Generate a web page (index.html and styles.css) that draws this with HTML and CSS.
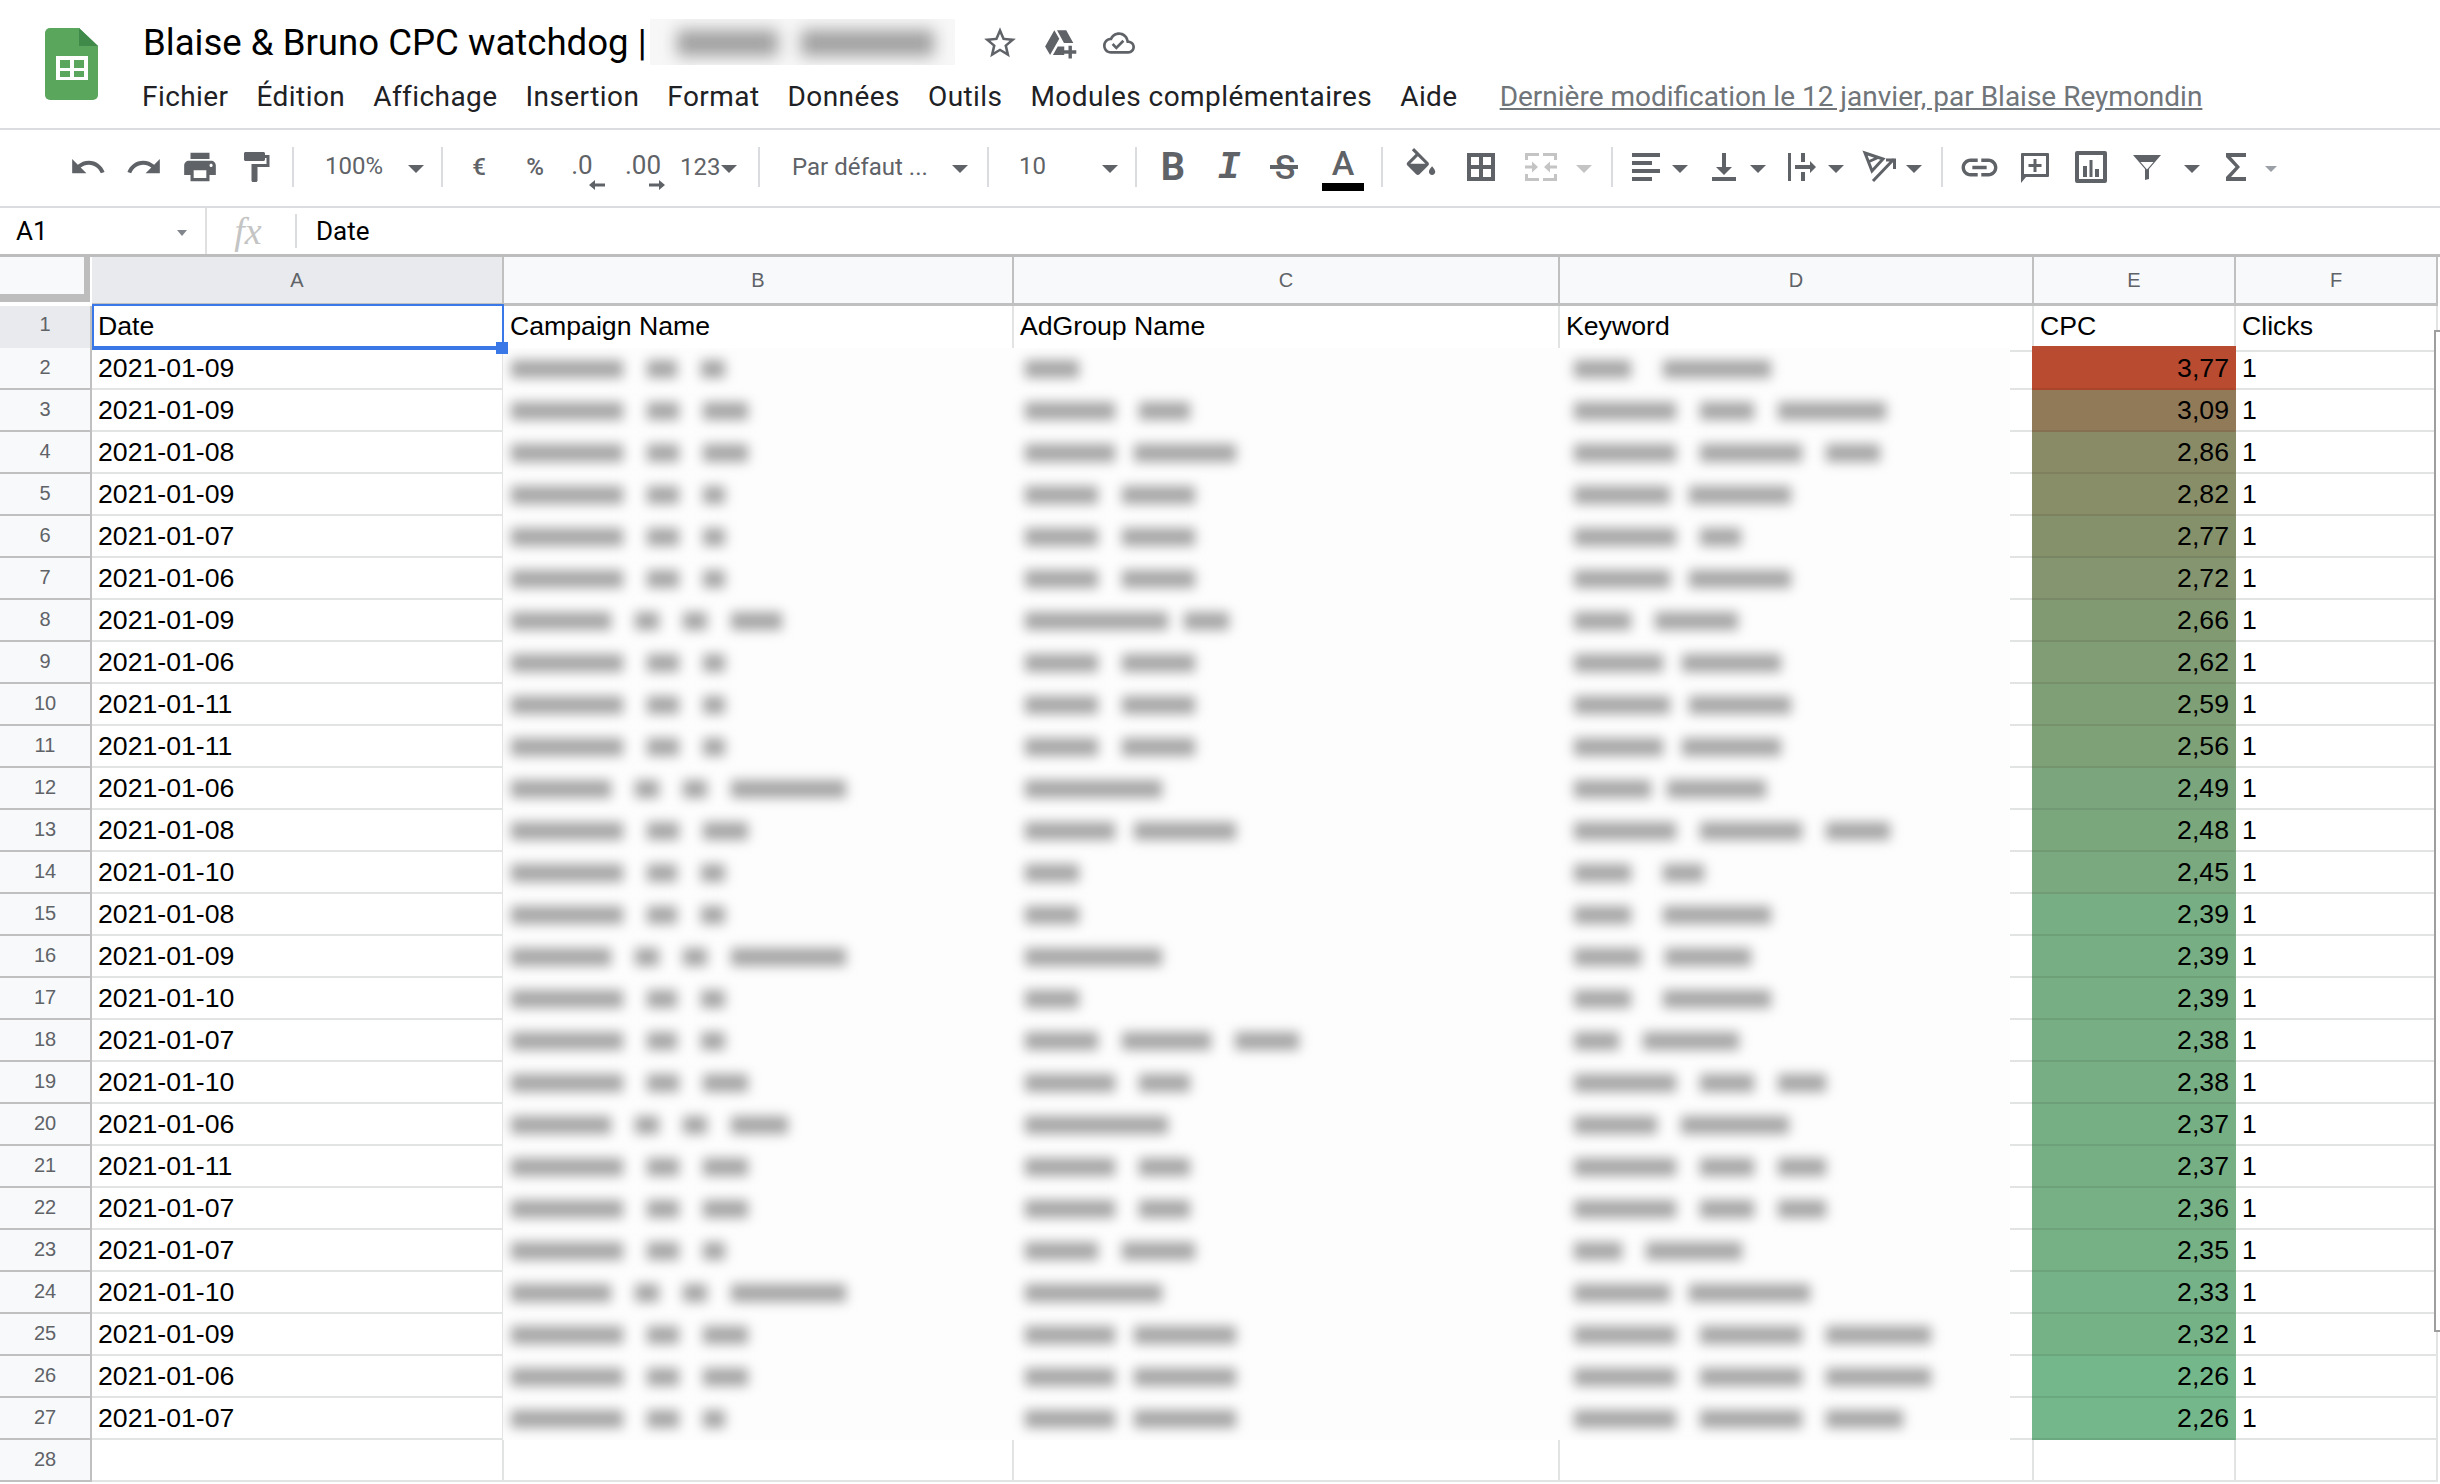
FILE: index.html
```html
<!DOCTYPE html>
<html lang="fr">
  <head>
    <meta charset="UTF-8" />
    <title>Blaise &amp; Bruno CPC watchdog - Google Sheets</title>
    <link rel="stylesheet" href="styles.css">
  </head>

  <body>
    <!-- en-tête du document -->
    <header class="header">
      <svg class="logo" viewBox="0 0 53 72">
        <path fill="#5aa65c" d="M5 0h29l19 18v49a5 5 0 0 1-5 5H5a5 5 0 0 1-5-5V5a5 5 0 0 1 5-5z" />
        <path fill="#3f8a48" d="M34 0l19 18H34z" />
        <path fill="#fff" fill-rule="evenodd" d="M11 28h32v24H11z M15 32v8h10v-8z M29 32v8h10v-8z M15 43v6h10v-6z M29 43v6h10v-6z" />
      </svg>
      <div class="doc">
        <div class="title-row">
          <span class="title">Blaise &amp; Bruno CPC watchdog |</span>
          <span class="title-hidden"><span class="title-blur"><i class="t1"></i><i class="t2"></i></span></span>
          <svg class="title-icon star" viewBox="0 0 24 24"><path d="M22 9.24l-7.19-.62L12 2 9.19 8.63 2 9.24l5.46 4.73L5.82 21 12 17.27 18.18 21l-1.63-7.03L22 9.24zM12 15.4l-3.76 2.27 1-4.28-3.32-2.88 4.38-.38L12 6.1l1.71 4.04 4.38.38-3.32 2.88 1 4.28L12 15.4z" /></svg>
          <svg class="title-icon drive" viewBox="0 0 24 24"><path d="M8 3L1.5 14.5 5 20.5l6.5-11.5z M9.9 3h6.5l5 9h-6.6z M7 20.5l3.4-6h4.6v6z M18 14h2.4v3.2H23.500v2.400h-3.100V23H18v-3.400h-3v-2.400h3z" /></svg>
          <svg class="title-icon cloud" viewBox="0 0 24 24"><path d="M19.35 10.04C18.67 6.59 15.64 4 12 4 9.11 4 6.6 5.64 5.35 8.04 2.34 8.36 0 10.91 0 14c0 3.31 2.69 6 6 6h13c2.76 0 5-2.24 5-5 0-2.64-2.05-4.78-4.65-4.96zM19 18H6c-2.21 0-4-1.79-4-4 0-2.05 1.53-3.76 3.56-3.97l1.07-.11.5-.95C8.08 7.14 9.94 6 12 6c2.62 0 4.88 1.86 5.39 4.43l.3 1.5 1.53.11c1.56.1 2.78 1.41 2.78 2.96 0 1.65-1.35 3-3 3zm-9-3.82l-2.09-2.09L6.5 13.5 10 17l6.01-6.01-1.41-1.41z" /></svg>
        </div>
        <nav class="menu">
          <span>Fichier</span>
          <span>Édition</span>
          <span>Affichage</span>
          <span>Insertion</span>
          <span>Format</span>
          <span>Données</span>
          <span>Outils</span>
          <span>Modules complémentaires</span>
          <span>Aide</span>
          <a class="last-edit">Dernière modification le 12 janvier, par Blaise Reymondin</a>
        </nav>
      </div>
    </header>

    <!-- barre d'outils -->
    <div class="toolbar">
      <div class="btn"><svg class="i24" viewBox="0 0 24 24"><path d="M12.5 8c-2.65 0-5.05.99-6.9 2.6L2 7v9h9l-3.62-3.62c1.39-1.16 3.16-1.88 5.12-1.88 3.54 0 6.55 2.31 7.6 5.5l2.37-.78C21.08 11.03 17.15 8 12.5 8z" /></svg></div>
      <div class="btn"><svg class="i24" viewBox="0 0 24 24"><path d="M18.4 10.6C16.55 8.99 14.15 8 11.5 8c-4.65 0-8.58 3.03-9.96 7.22L3.9 16c1.05-3.19 4.05-5.5 7.6-5.5 1.95 0 3.73.72 5.12 1.88L13 16h9V7l-3.6 3.6z" /></svg></div>
      <div class="btn"><svg class="i24" viewBox="0 0 24 24"><path d="M19 8H5c-1.66 0-3 1.34-3 3v6h4v4h12v-4h4v-6c0-1.66-1.34-3-3-3zm-3 11H8v-5h8v5zm3-7c-.55 0-1-.45-1-1s.45-1 1-1 1 .45 1 1-.45 1-1 1zm-1-9H6v4h12V3z" /></svg></div>
      <div class="btn"><svg class="icon" viewBox="0 0 24 24"><path d="M18 4V3c0-.55-.45-1-1-1H5c-.55 0-1 .45-1 1v4c0 .55.45 1 1 1h12c.55 0 1-.45 1-1V6h1v4H9v11c0 .55.45 1 1 1h2c.55 0 1-.45 1-1v-9h8V4h-3z" /></svg></div>
      <div class="sep"></div>
      <div class="select zoom"><span>100%</span><b class="caret"></b></div>
      <div class="sep"></div>
      <div class="btn txt">€</div>
      <div class="btn txt">%</div>
      <div class="btn txt"><span class="dec one">.0<svg class="dec-arrow left" viewBox="0 0 16 10"><path d="M0 5l6-5v3.500h10v3H6V10z" /></svg></span></div>
      <div class="btn txt"><span class="dec two">.00<svg class="dec-arrow right" viewBox="0 0 16 10"><path d="M16 5l-6-5v3.500H0v3h10V10z" /></svg></span></div>
      <div class="select fmt"><span>123</span><b class="caret"></b></div>
      <div class="sep"></div>
      <div class="select font"><span>Par défaut ...</span><b class="caret"></b></div>
      <div class="sep"></div>
      <div class="select size"><span>10</span><b class="caret"></b></div>
      <div class="sep"></div>
      <div class="btn letter bold">B</div>
      <div class="btn letter ital">I</div>
      <div class="btn letter strike"><span class="strike-s">S</span></div>
      <div class="btn wide letter color"><span class="color-a">A</span><b class="color-bar"></b></div>
      <div class="sep"></div>
      <div class="btn wide"><svg class="i24" viewBox="0 0 24 24"><path d="M16.56 8.94L7.62 0 6.21 1.41l2.38 2.38-5.15 5.15c-.59.59-.59 1.54 0 2.12l5.5 5.5c.29.29.68.44 1.06.44s.77-.15 1.06-.44l5.5-5.5c.59-.58.59-1.53 0-2.12zM5.21 10L10 5.21 14.79 10H5.21zM19 11.5s-2 2.17-2 3.5c0 1.1.9 2 2 2s2-.9 2-2c0-1.33-2-3.5-2-3.5z" /></svg></div>
      <div class="btn wide"><svg class="icon" viewBox="0 0 36 36"><path fill-rule="evenodd" d="M4 4h28v28H4z M8 8v8h8V8z M20 8v8h8V8z M8 20v8h8v-8z M20 20v8h8v-8z" /></svg></div>
      <div class="btn wide"><svg class="icon off" viewBox="0 0 36 36"><path d="M2 4h14v3H5v4H2z M20 4h14v7h-3V7H20z M2 25h3v4h11v3H2z M31 25h3v7H20v-3h11z M2 16.500h7v-4l6 5.500-6 5.500v-4H2z M34 16.500h-7v-4l-6 5.500 6 5.500v-4h7z" /></svg></div>
      <b class="caret off merge-caret"></b>
      <div class="sep"></div>
      <div class="drops">
        <div class="drop"><svg class="icon" viewBox="0 0 36 36"><path d="M4 4h28v4H4z M4 12h20v4H4z M4 20h28v4H4z M4 28h20v4H4z" /></svg><b class="caret"></b></div>
        <div class="drop"><svg class="icon" viewBox="0 0 36 36"><path d="M6 28h24v4H6z M16 4h4v14h6l-8 8-8-8h6z" /></svg><b class="caret"></b></div>
        <div class="drop"><svg class="icon" viewBox="0 0 36 36"><path d="M4 4h3v28H4z M17 4h4v9h-4z M17 23h4v9h-4z M11 16h15v-4l6 6-6 6v-4H11z" /></svg><b class="caret"></b></div>
        <div class="drop"><svg class="icon" viewBox="0 0 36 36"><path class="stroke" d="M3 4l18 6-11 12z M6 13l9-4 M11 32L32 10 M24 11h8.500v9" /></svg><b class="caret"></b></div>
      </div>
      <div class="sep"></div>
      <div class="btn"><svg class="link" viewBox="0 0 24 24"><path d="M3.900 12c0-1.710 1.390-3.100 3.100-3.100h4V7H7c-2.760 0-5 2.240-5 5s2.240 5 5 5h4v-1.900H7c-1.710 0-3.100-1.390-3.100-3.100zM8 13h8v-2H8v2zm9-6h-4v1.900h4c1.710 0 3.100 1.390 3.100 3.100s-1.390 3.100-3.100 3.100h-4V17h4c2.760 0 5-2.240 5-5s-2.240-5-5-5z" /></svg></div>
      <div class="btn"><svg class="icon" viewBox="0 0 36 36"><path fill-rule="evenodd" d="M5 4h26a1 1 0 0 1 1 1v22a1 1 0 0 1-1 1H9l-5 6V5a1 1 0 0 1 1-1z M7 7v18h22V7z M16.500 10h3v5h5v3h-5v5h-3v-5h-5v-3h5z" /></svg></div>
      <div class="btn"><svg class="icon" viewBox="0 0 36 36"><path fill-rule="evenodd" d="M4 2h28a2 2 0 0 1 2 2v28a2 2 0 0 1-2 2H4a2 2 0 0 1-2-2V4a2 2 0 0 1 2-2z M6 6v24h24V6z M10 17h4v11h-4z M16.500 11h3v17h-3z M22 20h4v8h-4z" /></svg></div>
      <div class="btn"><svg class="icon" viewBox="0 0 36 36"><path fill-rule="evenodd" d="M4 6h28L20 20v10l-4 1V20z M11.500 13L18 20.500l6.500-7.500z" /></svg></div>
      <b class="caret filter-caret"></b>
      <div class="btn"><svg class="icon" viewBox="0 0 36 36"><path d="M8 4h20v4H13l9 10-9 10h15v4H8v-4l9.500-10L8 8z" /></svg></div>
      <b class="caret small"></b>
    </div>

    <!-- barre de formule -->
    <div class="formula">
      <div class="name-box"><span>A1</span><b class="caret tiny"></b></div>
      <div class="fx">fx</div>
      <div class="formula-sep"></div>
      <div class="formula-text">Date</div>
    </div>

    <!-- feuille -->
    <div class="sheet">
      <div class="row cols">
        <div class="corner"></div>
        <div class="col active">A</div>
        <div class="col">B</div>
        <div class="col">C</div>
        <div class="col">D</div>
        <div class="col">E</div>
        <div class="col">F</div>
      </div>
      <div class="row">
        <div class="num active">1</div>
        <div class="cell selected">Date<b class="handle"></b></div>
        <div class="cell">Campaign Name</div>
        <div class="cell">AdGroup Name</div>
        <div class="cell">Keyword</div>
        <div class="cell">CPC</div>
        <div class="cell">Clicks</div>
      </div>
      <div class="row"><div class="num">2</div><div class="cell">2021-01-09</div><div class="cell"></div><div class="cell"></div><div class="cell"></div><div class="cell heat first" style="background-color:#b94b30">3,77</div><div class="cell">1</div></div>
      <div class="row"><div class="num">3</div><div class="cell">2021-01-09</div><div class="cell"></div><div class="cell"></div><div class="cell"></div><div class="cell heat" style="background-color:#917a58">3,09</div><div class="cell">1</div></div>
      <div class="row"><div class="num">4</div><div class="cell">2021-01-08</div><div class="cell"></div><div class="cell"></div><div class="cell"></div><div class="cell heat" style="background-color:#898b66">2,86</div><div class="cell">1</div></div>
      <div class="row"><div class="num">5</div><div class="cell">2021-01-09</div><div class="cell"></div><div class="cell"></div><div class="cell"></div><div class="cell heat" style="background-color:#878e68">2,82</div><div class="cell">1</div></div>
      <div class="row"><div class="num">6</div><div class="cell">2021-01-07</div><div class="cell"></div><div class="cell"></div><div class="cell"></div><div class="cell heat" style="background-color:#84916b">2,77</div><div class="cell">1</div></div>
      <div class="row"><div class="num">7</div><div class="cell">2021-01-06</div><div class="cell"></div><div class="cell"></div><div class="cell"></div><div class="cell heat" style="background-color:#849570">2,72</div><div class="cell">1</div></div>
      <div class="row"><div class="num">8</div><div class="cell">2021-01-09</div><div class="cell"></div><div class="cell"></div><div class="cell"></div><div class="cell heat" style="background-color:#829a72">2,66</div><div class="cell">1</div></div>
      <div class="row"><div class="num">9</div><div class="cell">2021-01-06</div><div class="cell"></div><div class="cell"></div><div class="cell"></div><div class="cell heat" style="background-color:#809d75">2,62</div><div class="cell">1</div></div>
      <div class="row"><div class="num">10</div><div class="cell">2021-01-11</div><div class="cell"></div><div class="cell"></div><div class="cell"></div><div class="cell heat" style="background-color:#7f9f77">2,59</div><div class="cell">1</div></div>
      <div class="row"><div class="num">11</div><div class="cell">2021-01-11</div><div class="cell"></div><div class="cell"></div><div class="cell"></div><div class="cell heat" style="background-color:#7ea178">2,56</div><div class="cell">1</div></div>
      <div class="row"><div class="num">12</div><div class="cell">2021-01-06</div><div class="cell"></div><div class="cell"></div><div class="cell"></div><div class="cell heat" style="background-color:#7ba67d">2,49</div><div class="cell">1</div></div>
      <div class="row"><div class="num">13</div><div class="cell">2021-01-08</div><div class="cell"></div><div class="cell"></div><div class="cell"></div><div class="cell heat" style="background-color:#7ba77d">2,48</div><div class="cell">1</div></div>
      <div class="row"><div class="num">14</div><div class="cell">2021-01-10</div><div class="cell"></div><div class="cell"></div><div class="cell"></div><div class="cell heat" style="background-color:#7aa97f">2,45</div><div class="cell">1</div></div>
      <div class="row"><div class="num">15</div><div class="cell">2021-01-08</div><div class="cell"></div><div class="cell"></div><div class="cell"></div><div class="cell heat" style="background-color:#78ae83">2,39</div><div class="cell">1</div></div>
      <div class="row"><div class="num">16</div><div class="cell">2021-01-09</div><div class="cell"></div><div class="cell"></div><div class="cell"></div><div class="cell heat" style="background-color:#78ae83">2,39</div><div class="cell">1</div></div>
      <div class="row"><div class="num">17</div><div class="cell">2021-01-10</div><div class="cell"></div><div class="cell"></div><div class="cell"></div><div class="cell heat" style="background-color:#78ae83">2,39</div><div class="cell">1</div></div>
      <div class="row"><div class="num">18</div><div class="cell">2021-01-07</div><div class="cell"></div><div class="cell"></div><div class="cell"></div><div class="cell heat" style="background-color:#77ae84">2,38</div><div class="cell">1</div></div>
      <div class="row"><div class="num">19</div><div class="cell">2021-01-10</div><div class="cell"></div><div class="cell"></div><div class="cell"></div><div class="cell heat" style="background-color:#77ae84">2,38</div><div class="cell">1</div></div>
      <div class="row"><div class="num">20</div><div class="cell">2021-01-06</div><div class="cell"></div><div class="cell"></div><div class="cell"></div><div class="cell heat" style="background-color:#77af84">2,37</div><div class="cell">1</div></div>
      <div class="row"><div class="num">21</div><div class="cell">2021-01-11</div><div class="cell"></div><div class="cell"></div><div class="cell"></div><div class="cell heat" style="background-color:#77af84">2,37</div><div class="cell">1</div></div>
      <div class="row"><div class="num">22</div><div class="cell">2021-01-07</div><div class="cell"></div><div class="cell"></div><div class="cell"></div><div class="cell heat" style="background-color:#77b085">2,36</div><div class="cell">1</div></div>
      <div class="row"><div class="num">23</div><div class="cell">2021-01-07</div><div class="cell"></div><div class="cell"></div><div class="cell"></div><div class="cell heat" style="background-color:#76b185">2,35</div><div class="cell">1</div></div>
      <div class="row"><div class="num">24</div><div class="cell">2021-01-10</div><div class="cell"></div><div class="cell"></div><div class="cell"></div><div class="cell heat" style="background-color:#76b287">2,33</div><div class="cell">1</div></div>
      <div class="row"><div class="num">25</div><div class="cell">2021-01-09</div><div class="cell"></div><div class="cell"></div><div class="cell"></div><div class="cell heat" style="background-color:#75b387">2,32</div><div class="cell">1</div></div>
      <div class="row"><div class="num">26</div><div class="cell">2021-01-06</div><div class="cell"></div><div class="cell"></div><div class="cell"></div><div class="cell heat" style="background-color:#73b78b">2,26</div><div class="cell">1</div></div>
      <div class="row"><div class="num">27</div><div class="cell">2021-01-07</div><div class="cell"></div><div class="cell"></div><div class="cell"></div><div class="cell heat" style="background-color:#73b78b">2,26</div><div class="cell">1</div></div>
      <div class="row"><div class="num">28</div><div class="cell"></div><div class="cell"></div><div class="cell"></div><div class="cell"></div><div class="cell"></div><div class="cell"></div></div>

      <!-- colonnes B à D floutées sur la capture -->
      <div class="redacted">
        <div class="redacted-inner">
          <div class="r"><span><i class="w112"></i><i class="w30"></i><i class="w24"></i></span><span><i class="w54"></i></span><span><i class="w57"></i><i class="w108 g32"></i></span></div>
          <div class="r"><span><i class="w112"></i><i class="w32"></i><i class="w45"></i></span><span><i class="w90"></i><i class="w51"></i></span><span><i class="w102"></i><i class="w54"></i><i class="w108"></i></span></div>
          <div class="r"><span><i class="w112"></i><i class="w32"></i><i class="w45"></i></span><span><i class="w90"></i><i class="w102 g19"></i></span><span><i class="w102"></i><i class="w102"></i><i class="w54"></i></span></div>
          <div class="r"><span><i class="w112"></i><i class="w32"></i><i class="w22"></i></span><span><i class="w73"></i><i class="w73"></i></span><span><i class="w96"></i><i class="w102 g19"></i></span></div>
          <div class="r"><span><i class="w112"></i><i class="w32"></i><i class="w22"></i></span><span><i class="w73"></i><i class="w73"></i></span><span><i class="w102"></i><i class="w41"></i></span></div>
          <div class="r"><span><i class="w112"></i><i class="w32"></i><i class="w22"></i></span><span><i class="w73"></i><i class="w73"></i></span><span><i class="w96"></i><i class="w102 g19"></i></span></div>
          <div class="r"><span><i class="w100"></i><i class="w24"></i><i class="w24"></i><i class="w51"></i></span><span><i class="w143"></i><i class="w45 g16"></i></span><span><i class="w57"></i><i class="w83"></i></span></div>
          <div class="r"><span><i class="w112"></i><i class="w32"></i><i class="w22"></i></span><span><i class="w73"></i><i class="w73"></i></span><span><i class="w89"></i><i class="w99 g19"></i></span></div>
          <div class="r"><span><i class="w112"></i><i class="w32"></i><i class="w22"></i></span><span><i class="w73"></i><i class="w73"></i></span><span><i class="w96"></i><i class="w102 g19"></i></span></div>
          <div class="r"><span><i class="w112"></i><i class="w32"></i><i class="w22"></i></span><span><i class="w73"></i><i class="w73"></i></span><span><i class="w89"></i><i class="w99 g19"></i></span></div>
          <div class="r"><span><i class="w100"></i><i class="w24"></i><i class="w24"></i><i class="w115"></i></span><span><i class="w137"></i></span><span><i class="w77"></i><i class="w99 g16"></i></span></div>
          <div class="r"><span><i class="w112"></i><i class="w32"></i><i class="w45"></i></span><span><i class="w90"></i><i class="w102 g19"></i></span><span><i class="w102"></i><i class="w102"></i><i class="w64"></i></span></div>
          <div class="r"><span><i class="w112"></i><i class="w30"></i><i class="w24"></i></span><span><i class="w54"></i></span><span><i class="w57"></i><i class="w41 g32"></i></span></div>
          <div class="r"><span><i class="w112"></i><i class="w30"></i><i class="w24"></i></span><span><i class="w54"></i></span><span><i class="w57"></i><i class="w108 g32"></i></span></div>
          <div class="r"><span><i class="w100"></i><i class="w24"></i><i class="w24"></i><i class="w115"></i></span><span><i class="w137"></i></span><span><i class="w67"></i><i class="w86"></i></span></div>
          <div class="r"><span><i class="w112"></i><i class="w30"></i><i class="w24"></i></span><span><i class="w54"></i></span><span><i class="w57"></i><i class="w108 g32"></i></span></div>
          <div class="r"><span><i class="w112"></i><i class="w30"></i><i class="w24"></i></span><span><i class="w73"></i><i class="w89"></i><i class="w64"></i></span><span><i class="w45"></i><i class="w96"></i></span></div>
          <div class="r"><span><i class="w112"></i><i class="w32"></i><i class="w45"></i></span><span><i class="w90"></i><i class="w51"></i></span><span><i class="w102"></i><i class="w54"></i><i class="w48"></i></span></div>
          <div class="r"><span><i class="w100"></i><i class="w24"></i><i class="w24"></i><i class="w57"></i></span><span><i class="w143"></i></span><span><i class="w83"></i><i class="w108"></i></span></div>
          <div class="r"><span><i class="w112"></i><i class="w32"></i><i class="w45"></i></span><span><i class="w90"></i><i class="w51"></i></span><span><i class="w102"></i><i class="w54"></i><i class="w48"></i></span></div>
          <div class="r"><span><i class="w112"></i><i class="w32"></i><i class="w45"></i></span><span><i class="w90"></i><i class="w51"></i></span><span><i class="w102"></i><i class="w54"></i><i class="w48"></i></span></div>
          <div class="r"><span><i class="w112"></i><i class="w32"></i><i class="w22"></i></span><span><i class="w73"></i><i class="w73"></i></span><span><i class="w48"></i><i class="w96"></i></span></div>
          <div class="r"><span><i class="w100"></i><i class="w24"></i><i class="w24"></i><i class="w115"></i></span><span><i class="w137"></i></span><span><i class="w96"></i><i class="w121 g19"></i></span></div>
          <div class="r"><span><i class="w112"></i><i class="w32"></i><i class="w45"></i></span><span><i class="w90"></i><i class="w102 g19"></i></span><span><i class="w102"></i><i class="w102"></i><i class="w105"></i></span></div>
          <div class="r"><span><i class="w112"></i><i class="w32"></i><i class="w45"></i></span><span><i class="w90"></i><i class="w102 g19"></i></span><span><i class="w102"></i><i class="w102"></i><i class="w105"></i></span></div>
          <div class="r"><span><i class="w112"></i><i class="w32"></i><i class="w22"></i></span><span><i class="w90"></i><i class="w102 g19"></i></span><span><i class="w102"></i><i class="w102"></i><i class="w77"></i></span></div>
        </div>
      </div>

      <div class="scrollbar"></div>
    </div>
  </body>
</html>
```

FILE: styles.css
```css
* {
  margin: 0;
  padding: 0;
  box-sizing: border-box;
}

body {
  width: 2440px;
  height: 1484px;
  overflow: hidden;
  background: #fff;
  font-family: Roboto, sans-serif;
  color: #202124;
}

svg {
  display: block;
  flex: none;
  fill: #5f6368;
}

/* en-tête */
.header {
  display: flex;
  height: 130px;
  border-bottom: 2px solid #dadce0;
}

.logo {
  width: 53px;
  height: 72px;
  margin: 28px 45px 0 45px;
}

.doc {
  padding-top: 19px;
}

.title-row {
  display: flex;
  align-items: center;
  height: 46px;
}

.title {
  font-size: 36.6px;
  color: #000;
  white-space: nowrap;
}

.title-hidden {
  width: 305px;
  height: 46px;
  margin-left: 3px;
  background: #f7f7f7;
  overflow: hidden;
}

.title-blur {
  display: flex;
  gap: 23px;
  padding: 11px 0 0 27px;
  filter: blur(8px);
}

.title-blur i {
  height: 26px;
  background: #a0a0a0;
}

.title-blur .t1 {
  width: 101px;
}

.title-blur .t2 {
  width: 133px;
}

.title-icon {
  width: 38px;
  height: 38px;
  margin-top: 2px;
}

.star {
  margin-left: 26px;
}

.drive {
  width: 34px;
  height: 34px;
  margin-left: 24px;
}

.cloud {
  width: 32px;
  height: 32px;
  margin-left: 26px;
}

.menu {
  display: flex;
  gap: 28px;
  margin: 12px 0 0 -1px;
  height: 40px;
  line-height: 40px;
  font-size: 28px;
  letter-spacing: 0.43px;
  white-space: nowrap;
}

.last-edit {
  margin-left: 14px;
  letter-spacing: 0;
  color: #70757a;
  text-decoration: underline;
}

/* barre d'outils */
.toolbar {
  display: flex;
  align-items: center;
  height: 78px;
  padding: 0 0 2px 60px;
  border-bottom: 2px solid #dadce0;
  font-size: 24px;
  color: #5f6368;
}

.btn {
  display: flex;
  flex: none;
  align-items: center;
  justify-content: center;
  width: 56px;
  height: 60px;
}

.btn.wide {
  width: 60px;
}

.txt {
  font-weight: 500;
}

.icon {
  width: 36px;
  height: 36px;
}

.i24 {
  width: 38px;
  height: 38px;
}

.link {
  width: 43px;
  height: 43px;
}

.icon.off {
  fill: #c4c4c4;
}

.stroke {
  fill: none;
  stroke: #5f6368;
  stroke-width: 3;
}

.sep {
  flex: none;
  width: 2px;
  height: 40px;
  margin: 0 8px;
  background: #dadce0;
}

.select {
  display: flex;
  flex: none;
  align-items: center;
  justify-content: space-between;
  white-space: nowrap;
}

.zoom {
  width: 131px;
  padding: 0 9px 0 23px;
}

.zoom span,
.size span {
  margin-top: -3px;
}

.fmt {
  width: 75px;
  padding: 0 13px 0 5px;
}

.font {
  width: 211px;
  padding: 0 11px 0 24px;
}

.size {
  width: 130px;
  padding: 0 9px 0 22px;
}

.caret {
  flex: none;
  width: 0;
  height: 0;
  margin-top: 4px;
  border-style: solid;
  border-width: 8px 8px 0;
  border-color: #5f6368 transparent transparent;
}

.caret.off {
  border-top-color: #c4c4c4;
}

.caret.small {
  margin-left: 1px;
  border-width: 6px 6px 0;
  border-top-color: #9aa0a6;
}

.caret.tiny {
  border-width: 6px 5px 0;
  border-top-color: #80868b;
}

.merge-caret {
  margin: 4px 11px 0 5px;
}

.filter-caret {
  margin: 4px 8px 0 9px;
}

.drops {
  display: flex;
  flex: none;
  gap: 18px;
  margin: 0 11px 0 7px;
}

.drop {
  display: flex;
  align-items: center;
  gap: 8px;
}

.dec {
  position: relative;
  margin-top: -4px;
  font-weight: 400;
  font-size: 26px;
}

.dec.one {
  margin-right: 18px;
}

.dec.two {
  margin-right: 8px;
}

.dec-arrow {
  position: absolute;
  top: 30px;
  width: 16px;
  height: 10px;
}

.dec-arrow.left {
  right: -12px;
}

.dec-arrow.right {
  right: -4px;
}

.letter {
  font-size: 34px;
  color: #5f6368;
}

.bold {
  font-weight: 700;
  font-size: 38px;
}

.ital {
  font-family: "Liberation Mono", monospace;
  font-style: italic;
  font-weight: 700;
  font-size: 38px;
}

.strike-s {
  position: relative;
  font-weight: 500;
}

.strike-s::after {
  content: "";
  position: absolute;
  top: 18px;
  left: -5px;
  width: 28px;
  height: 4px;
  background: #5f6368;
}

.color {
  flex-direction: column;
}

.color-a {
  font-size: 34px;
  font-weight: 500;
  line-height: 38px;
}

.color-bar {
  width: 42px;
  height: 8px;
  margin-top: 1px;
  background: #000;
}

/* barre de formule */
.formula {
  display: flex;
  align-items: center;
  height: 49px;
  border-bottom: 3px solid #bdbdbd;
  font-size: 26px;
  color: #000;
}

.name-box {
  display: flex;
  align-items: center;
  justify-content: space-between;
  width: 207px;
  height: 46px;
  padding: 0 18px 0 16px;
  border-right: 2px solid #e0e0e0;
}

.fx {
  width: 88px;
  padding-right: 6px;
  font-family: "Liberation Serif", serif;
  font-style: italic;
  font-size: 38px;
  line-height: 46px;
  text-align: center;
  color: #c4c4c4;
}

.formula-sep {
  width: 2px;
  height: 34px;
  background: #dadce0;
}

.formula-text {
  padding-left: 19px;
}

/* feuille */
.sheet {
  position: relative;
  font-family: "Liberation Sans", Arial, sans-serif;
}

.row {
  display: grid;
  grid-template-columns: 92px 412px 510px 546px 474px 202px 202px;
  height: 42px;
}

.row.cols {
  height: 49px;
}

.corner {
  height: 45px;
  background: #f8f9fa;
  border-right: 6px solid #bdbdbd;
  border-bottom: 8px solid #bdbdbd;
  width: 90px;
}

.col {
  display: flex;
  align-items: center;
  justify-content: center;
  background: #f8f9fa;
  border-right: 2px solid #c0c0c0;
  border-bottom: 3px solid #c0c0c0;
  font-size: 20px;
  color: #5f6368;
}

.col.active,
.num.active {
  background: #e8eaed;
}

.num {
  background: #f8f9fa;
  border-right: 2px solid #c0c0c0;
  border-bottom: 2px solid #c0c0c0;
  font-size: 20px;
  line-height: 38px;
  text-align: center;
  color: #5f6368;
}

.num.active {
  line-height: 36px;
}

.cell {
  padding: 1px 6px 0;
  border-right: 2px solid #e2e3e3;
  border-bottom: 2px solid #e2e3e3;
  font-size: 26.67px;
  line-height: 39px;
  color: #000;
  white-space: nowrap;
}

.heat {
  margin-left: -2px;
  padding-right: 5px;
  border-right-color: transparent;
  border-bottom-color: rgba(0, 0, 0, 0.08);
  text-align: right;
}

.heat.first {
  margin-top: -2px;
  padding-top: 3px;
}

.selected {
  position: relative;
  margin: -2px 0 2px;
  padding: 1px 4px 0;
  border: 2px solid #3b78e7;
  border-bottom-width: 4px;
}

.handle {
  position: absolute;
  right: -6px;
  bottom: -8px;
  z-index: 2;
  width: 12px;
  height: 12px;
  background: #3b78e7;
}

.redacted {
  position: absolute;
  top: 91px;
  left: 503px;
  z-index: 1;
  width: 1507px;
  height: 1092px;
  overflow: hidden;
  background: #fdfdfd;
}

.redacted-inner {
  filter: blur(6px);
}

.r {
  display: grid;
  grid-template-columns: 511px 546px 450px;
  align-items: center;
  height: 42px;
}

.r span {
  display: flex;
  gap: 24px;
  padding-left: 8px;
}

.r span:nth-child(2) {
  padding-left: 11px;
}

.r span:nth-child(3) {
  padding-left: 14px;
}

.r i {
  height: 18px;
  background: #a6a6a6;
}

.g16 { margin-left: -8px; }
.g19 { margin-left: -5px; }
.g32 { margin-left: 8px; }

.w22 { width: 22px; }
.w24 { width: 24px; }
.w30 { width: 30px; }
.w32 { width: 32px; }
.w41 { width: 41px; }
.w45 { width: 45px; }
.w48 { width: 48px; }
.w51 { width: 51px; }
.w54 { width: 54px; }
.w57 { width: 57px; }
.w64 { width: 64px; }
.w67 { width: 67px; }
.w73 { width: 73px; }
.w77 { width: 77px; }
.w83 { width: 83px; }
.w86 { width: 86px; }
.w89 { width: 89px; }
.w90 { width: 90px; }
.w96 { width: 96px; }
.w99 { width: 99px; }
.w100 { width: 100px; }
.w102 { width: 102px; }
.w105 { width: 105px; }
.w108 { width: 108px; }
.w112 { width: 112px; }
.w115 { width: 115px; }
.w121 { width: 121px; }
.w137 { width: 137px; }
.w143 { width: 143px; }

.scrollbar {
  position: absolute;
  top: 73px;
  right: 0;
  z-index: 1;
  width: 6px;
  height: 1002px;
  background: #fff;
  border: 2px solid #9e9e9e;
  border-right: 0;
}
```
